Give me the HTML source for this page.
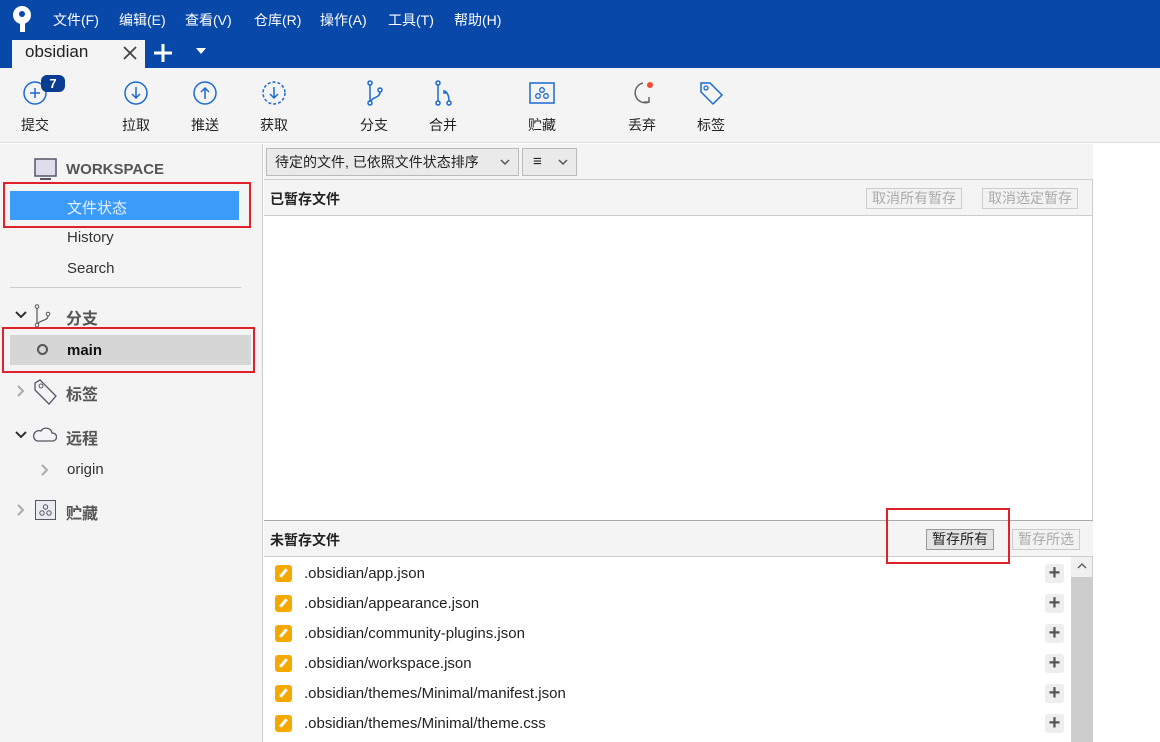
<!DOCTYPE html><html><head><meta charset="utf-8"><style>
*{margin:0;padding:0;box-sizing:border-box}
body{width:1160px;height:742px;overflow:hidden;background:#fff;font-family:"Liberation Sans","Noto Sans CJK SC",sans-serif;position:relative;font-size:14px;color:#222}
.a{position:absolute}
.menu span{position:absolute;top:10px;color:#fff;font-size:14px}
.tb{position:absolute;top:80px;width:60px;text-align:center;font-size:14px;color:#222}
.tb svg{display:block;margin:0 auto 9px}
.side{color:#333;font-size:15px}
.btn{position:absolute;height:21px;border:1px solid #ccc;background:#f2f2f2;color:#aaa;font-size:14px;line-height:19px;padding:0 5px}
.row{position:absolute;left:275px;font-size:15px;color:#222}
.row i{position:absolute;left:0;top:0;width:17px;height:17px;background:#f5a800;border-radius:3px}
.row i:after{content:"";position:absolute;left:7px;top:3px;width:3px;height:10px;background:#fff;transform:rotate(40deg)}
.row span{position:absolute;left:29px;top:0;white-space:nowrap;line-height:17px}
.plus{position:absolute;left:1045px;width:19px;height:19px;background:#eee;border-radius:3px;color:#555;font-size:20px;line-height:18px;text-align:center;font-weight:bold}
</style></head><body>
<div class="a" style="left:0;top:0;width:1160px;height:68px;background:#0848a8"></div>
<svg class="a" style="left:10px;top:5px" width="24" height="28" viewBox="0 0 24 28"><circle cx="12" cy="10" r="9" fill="#fff"/><circle cx="12" cy="9" r="3" fill="#0848a8"/><rect x="10" y="12" width="5" height="15" fill="#fff"/></svg>
<div class="menu"><span style="left:53px">文件(F)</span><span style="left:119px">编辑(E)</span><span style="left:185px">查看(V)</span><span style="left:254px">仓库(R)</span><span style="left:320px">操作(A)</span><span style="left:388px">工具(T)</span><span style="left:454px">帮助(H)</span></div>
<div class="a" style="left:12px;top:40px;width:133px;height:28px;background:#f4f4f4"></div>
<div class="a" style="left:25px;top:42px;font-size:17px;color:#222">obsidian</div>
<svg class="a" style="left:123px;top:46px" width="14" height="14"><path d="M1 1l12 12M13 1L1 13" stroke="#444" stroke-width="1.8"/></svg>
<svg class="a" style="left:153px;top:43px" width="20" height="20"><path d="M10 1v18M1 10h18" stroke="#fff" stroke-width="3"/></svg>
<div class="a" style="left:196px;top:48px;width:0;height:0;border:5px solid transparent;border-top:6px solid #fff"></div>
<div class="a" style="left:0;top:68px;width:1160px;height:75px;background:#f4f4f4;border-bottom:1px solid #ddd"></div>
<div class="tb" style="left:5px"><svg width="26" height="26"><circle cx="13" cy="13" r="11" fill="none" stroke="#1b6ad0" stroke-width="1.5"/><path d="M8 13h10M13 8v10" stroke="#1b6ad0" stroke-width="1.5"/></svg>提交</div>
<div class="a" style="left:41px;top:75px;width:24px;height:17px;background:#0a3d91;border-radius:6px;color:#fff;font-weight:bold;font-size:13px;text-align:center;line-height:17px">7</div>
<div class="tb" style="left:106px"><svg width="26" height="26"><circle cx="13" cy="13" r="11" fill="none" stroke="#1b6ad0" stroke-width="1.5"/><path d="M13 7v11M9 14l4 4 4-4" fill="none" stroke="#1b6ad0" stroke-width="1.5"/></svg>拉取</div>
<div class="tb" style="left:175px"><svg width="26" height="26"><circle cx="13" cy="13" r="11" fill="none" stroke="#1b6ad0" stroke-width="1.5"/><path d="M13 19V8M9 12l4-4 4 4" fill="none" stroke="#1b6ad0" stroke-width="1.5"/></svg>推送</div>
<div class="tb" style="left:244px"><svg width="26" height="26"><circle cx="13" cy="13" r="11" fill="none" stroke="#1b6ad0" stroke-width="1.5" stroke-dasharray="3 2"/><path d="M13 7v11M9 14l4 4 4-4" fill="none" stroke="#1b6ad0" stroke-width="1.5"/></svg>获取</div>
<div class="tb" style="left:344px"><svg width="26" height="26"><circle cx="9" cy="3" r="2" fill="none" stroke="#1b6ad0" stroke-width="1.5"/><circle cx="9" cy="23" r="2" fill="none" stroke="#1b6ad0" stroke-width="1.5"/><circle cx="19" cy="10" r="2" fill="none" stroke="#1b6ad0" stroke-width="1.5"/><path d="M9 5v16M19 12c0 6-8 5-9 9" fill="none" stroke="#1b6ad0" stroke-width="1.5"/></svg>分支</div>
<div class="tb" style="left:413px"><svg width="26" height="26"><circle cx="8" cy="3" r="2" fill="none" stroke="#1b6ad0" stroke-width="1.5"/><circle cx="8" cy="23" r="2" fill="none" stroke="#1b6ad0" stroke-width="1.5"/><circle cx="19" cy="23" r="2" fill="none" stroke="#1b6ad0" stroke-width="1.5"/><path d="M8 5v16M19 21c0-5-1-8-4-10M14 10v3h3" fill="none" stroke="#1b6ad0" stroke-width="1.5"/></svg>合并</div>
<div class="tb" style="left:512px"><svg width="26" height="26"><rect x="1" y="3" width="24" height="20" fill="none" stroke="#1b6ad0" stroke-width="1.5"/><circle cx="13" cy="10" r="2.3" fill="none" stroke="#1b6ad0" stroke-width="1.3"/><circle cx="9" cy="16" r="2.3" fill="none" stroke="#1b6ad0" stroke-width="1.3"/><circle cx="17" cy="16" r="2.3" fill="none" stroke="#1b6ad0" stroke-width="1.3"/></svg>贮藏</div>
<div class="tb" style="left:612px"><svg width="26" height="26"><path d="M20 22A10 10 0 1 1 14 3" fill="none" stroke="#666" stroke-width="1.5"/><path d="M15 22h5v-5" fill="none" stroke="#666" stroke-width="1.5"/><circle cx="21" cy="5" r="3" fill="#f04a30"/></svg>丢弃</div>
<div class="tb" style="left:681px"><svg width="26" height="26"><path d="M3 3h9l12 12-9 9L3 12z" fill="none" stroke="#1b6ad0" stroke-width="1.5"/><circle cx="8" cy="8" r="2" fill="none" stroke="#1b6ad0" stroke-width="1.3"/></svg>标签</div>
<div class="a" style="left:0;top:144px;width:263px;height:598px;background:#f4f4f4;border-right:1px solid #ccc"></div>
<svg class="a" style="left:34px;top:158px" width="24" height="24"><rect x="1" y="1" width="21" height="17" fill="#dde" stroke="#556" stroke-width="1.5"/><rect x="6" y="20" width="11" height="2" fill="#556"/></svg>
<div class="a side" style="left:66px;top:161px;font-weight:bold;color:#555">WORKSPACE</div>
<div class="a" style="left:10px;top:191px;width:229px;height:29px;background:#3a9bf9"></div>
<div class="a" style="left:67px;top:197px;color:#e8f2ff;font-size:15px">文件状态</div>
<div class="a" style="left:3px;top:182px;width:248px;height:46px;border:2px solid #e0202a"></div>
<div class="a side" style="left:67px;top:229px">History</div>
<div class="a side" style="left:67px;top:260px">Search</div>
<div class="a" style="left:10px;top:287px;width:231px;height:1px;background:#ccc"></div>
<svg class="a" style="left:15px;top:311px" width="12" height="9"><path d="M1 1l5 5 5-5" fill="none" stroke="#333" stroke-width="2"/></svg>
<svg class="a" style="left:33px;top:304px" width="20" height="24"><circle cx="4" cy="2.5" r="1.8" fill="none" stroke="#555"/><circle cx="4" cy="21" r="1.8" fill="none" stroke="#555"/><circle cx="15" cy="10" r="1.8" fill="none" stroke="#555"/><path d="M4 4v15M15 12c0 5-9 4-10 8" fill="none" stroke="#555" stroke-width="1.2"/></svg>
<div class="a side" style="left:66px;top:305px;font-size:16px;font-weight:bold;color:#555">分支</div>
<div class="a" style="left:10px;top:335px;width:241px;height:30px;background:#d6d6d6"></div>
<div class="a" style="left:37px;top:344px;width:11px;height:11px;border:2.5px solid #555;border-radius:50%"></div>
<div class="a" style="left:67px;top:342px;font-size:15px;font-weight:bold;color:#111">main</div>
<div class="a" style="left:2px;top:327px;width:253px;height:46px;border:2px solid #e0202a"></div>
<svg class="a" style="left:17px;top:385px" width="8" height="12"><path d="M1 1l5 5-5 5" fill="none" stroke="#aaa" stroke-width="2"/></svg>
<svg class="a" style="left:32px;top:378px" width="26" height="28"><path d="M3 5l5-3 16 16-7 8L3 12z" fill="none" stroke="#556" stroke-width="1.3"/><circle cx="9" cy="8" r="2" fill="none" stroke="#556"/></svg>
<div class="a side" style="left:66px;top:381px;font-size:16px;font-weight:bold;color:#555">标签</div>
<svg class="a" style="left:15px;top:431px" width="12" height="9"><path d="M1 1l5 5 5-5" fill="none" stroke="#333" stroke-width="2"/></svg>
<svg class="a" style="left:33px;top:425px" width="24" height="18"><path d="M4 16h16a4 4 0 0 0-1-8 6 6 0 0 0-11-2 5 5 0 0 0-4 10z" fill="none" stroke="#556" stroke-width="1.3"/></svg>
<div class="a side" style="left:66px;top:425px;font-size:16px;font-weight:bold;color:#555">远程</div>
<svg class="a" style="left:41px;top:464px" width="8" height="12"><path d="M1 1l5 5-5 5" fill="none" stroke="#aaa" stroke-width="2"/></svg>
<div class="a side" style="left:67px;top:461px">origin</div>
<svg class="a" style="left:17px;top:504px" width="8" height="12"><path d="M1 1l5 5-5 5" fill="none" stroke="#aaa" stroke-width="2"/></svg>
<svg class="a" style="left:35px;top:500px" width="22" height="21"><rect x="0.5" y="0.5" width="20" height="19" fill="#e8ebf0" stroke="#556"/><circle cx="10.5" cy="7" r="2.2" fill="none" stroke="#556"/><circle cx="7" cy="13" r="2.2" fill="none" stroke="#556"/><circle cx="14" cy="13" r="2.2" fill="none" stroke="#556"/></svg>
<div class="a side" style="left:66px;top:500px;font-size:16px;font-weight:bold;color:#555">贮藏</div>
<div class="a" style="left:264px;top:144px;width:829px;height:36px;background:#f4f4f4;border-bottom:1px solid #ccc"></div>
<div class="a" style="left:266px;top:148px;width:253px;height:28px;background:#eaeaea;border:1px solid #bbb;font-size:14px;line-height:26px;padding-left:8px;color:#222">待定的文件, 已依照文件状态排序 <svg style="position:absolute;right:8px;top:10px" width="10" height="7"><path d="M1 1l4 4 4-4" fill="none" stroke="#555" stroke-width="1.5"/></svg></div>
<div class="a" style="left:522px;top:148px;width:55px;height:28px;background:#eaeaea;border:1px solid #bbb;font-size:15px;line-height:26px;padding-left:10px">≡ <svg style="position:absolute;right:8px;top:10px" width="10" height="7"><path d="M1 1l4 4 4-4" fill="none" stroke="#555" stroke-width="1.5"/></svg></div>
<div class="a" style="left:264px;top:180px;width:829px;height:36px;background:#f4f4f4;border-bottom:1px solid #ccc"></div>
<div class="a" style="left:270px;top:189px;font-weight:bold;font-size:14px">已暂存文件</div>
<div class="btn" style="left:866px;top:188px">取消所有暂存</div>
<div class="btn" style="left:982px;top:188px">取消选定暂存</div>
<div class="a" style="left:1092px;top:180px;width:1px;height:562px;background:#ccc"></div>
<div class="a" style="left:264px;top:520px;width:829px;height:37px;background:#f4f4f4;border-top:1px solid #aaa;border-bottom:1px solid #ccc"></div>
<div class="a" style="left:270px;top:530px;font-weight:bold;font-size:14px">未暂存文件</div>
<div class="btn" style="left:926px;top:529px;background:#e4e4e4;border-color:#999;color:#222">暂存所有</div>
<div class="btn" style="left:1012px;top:529px">暂存所选</div>
<div class="a" style="left:886px;top:508px;width:124px;height:56px;border:2px solid #e0202a"></div>
<div class="a" style="left:1071px;top:557px;width:21px;height:185px;background:#cdcdcd"></div>
<div class="a" style="left:1071px;top:557px;width:21px;height:20px;background:#f0f0f0"><svg style="position:absolute;left:6px;top:6px" width="10" height="6"><path d="M1 5l4-4 4 4" fill="none" stroke="#555" stroke-width="1.3"/></svg></div>
<div class="row" style="top:565px"><i></i><span>.obsidian/app.json</span></div>
<div class="row" style="top:595px"><i></i><span>.obsidian/appearance.json</span></div>
<div class="row" style="top:625px"><i></i><span>.obsidian/community-plugins.json</span></div>
<div class="row" style="top:655px"><i></i><span>.obsidian/workspace.json</span></div>
<div class="row" style="top:685px"><i></i><span>.obsidian/themes/Minimal/manifest.json</span></div>
<div class="row" style="top:715px"><i></i><span>.obsidian/themes/Minimal/theme.css</span></div>
<div class="plus" style="top:564px">+</div><div class="plus" style="top:594px">+</div><div class="plus" style="top:624px">+</div><div class="plus" style="top:654px">+</div><div class="plus" style="top:684px">+</div><div class="plus" style="top:714px">+</div>
</body></html>
